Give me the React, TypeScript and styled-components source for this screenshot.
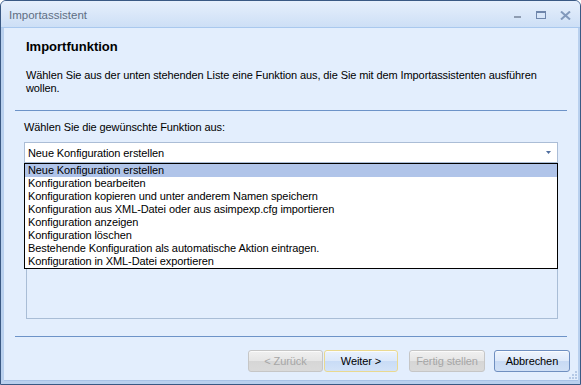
import React from 'react';
import styled, { createGlobalStyle } from 'styled-components';

const GlobalStyle = createGlobalStyle`
  html, body {
    margin: 0;
    padding: 0;
    width: 581px;
    height: 385px;
    overflow: hidden;
    background: #ffffff;
  }
  * {
    box-sizing: border-box;
  }
`;

const colours = {
  outer: '#3a5984',
  frame: '#b9d0ee',
  client: '#e3eefd',
  rule: '#6d93c8',
  text: '#000000',
  title: '#5f6e83',
};

const Window = styled.div`
  width: 581px;
  height: 385px;
  display: flex;
  flex-direction: column;
  border: 1px solid ${colours.outer};
  border-radius: 6px 6px 0 0;
  overflow: hidden;
  background: ${colours.frame};
  font-family: 'Liberation Sans', Arial, sans-serif;
  font-size: 11px;
  letter-spacing: -0.1px;
  color: ${colours.text};
`;

const TitleBar = styled.div`
  height: 27px;
  flex: none;
  display: flex;
  align-items: center;
  padding: 0 9px 0 8px;
  background: linear-gradient(#e6effc 0%, #dbe8f9 45%, #cddff6 100%);
  border-bottom: 1px solid #a9c8ee;
`;

const TitleText = styled.div`
  flex: 1;
  font-size: 11.5px;
  letter-spacing: 0;
  color: ${colours.title};
  padding-top: 2px;
`;

const Controls = styled.div`
  display: flex;
  align-items: center;
  gap: 14px;
  padding-top: 2px;
`;

const Frame = styled.div`
  flex: 1;
  display: flex;
  padding: 0 3px 3px 3px;
`;

const Client = styled.div`
  position: relative;
  flex: 1;
  display: flex;
  flex-direction: column;
  background: ${colours.client};
  border-bottom: 1px solid #a8c2e6;
`;

const Header = styled.div`
  padding: 11px 22px 15px 22px;
`;

const Heading = styled.div`
  font-size: 13px;
  font-weight: bold;
  letter-spacing: 0;
  line-height: 16px;
`;

const Description = styled.div`
  margin-top: 14px;
  line-height: 13px;
  width: 530px;
`;

const Rule = styled.div`
  height: 1px;
  margin: 0 11px;
  background: ${colours.rule};
  flex: none;
`;

const Main = styled.div`
  flex: 1;
  display: flex;
  flex-direction: column;
  padding: 10px 20px 17px 20px;
`;

const FieldLabel = styled.div`
  line-height: 13px;
`;

const ComboWrap = styled.div`
  position: relative;
  margin-top: 8px;
  z-index: 2;
`;

const Combo = styled.div`
  height: 21px;
  display: flex;
  align-items: center;
  padding: 0 6px 0 3px;
  background: #ffffff;
  border: 1px solid #abbdd6;
`;

const ComboValue = styled.div`
  flex: 1;
`;

const DropList = styled.div`
  position: absolute;
  top: 100%;
  left: 0;
  right: 0;
  background: #ffffff;
  border: 1px solid #000000;
`;

const Item = styled.div<{ $selected?: boolean }>`
  height: 13px;
  line-height: 13px;
  padding-left: 3px;
  white-space: nowrap;
  background: ${(p) => (p.$selected ? '#b0c4e9' : 'transparent')};
`;

const InfoPanel = styled.div`
  flex: 1;
  margin: 6px 0 0 2px;
  border: 1px solid #a9bdd6;
`;

const Footer = styled.div`
  display: flex;
  align-items: center;
  justify-content: flex-end;
  padding: 13px 8px 8px 0;
`;

const Button = styled.div<{ $variant: 'disabled' | 'focus' | 'normal'; $gap: number; $width: number }>`
  width: ${(p) => p.$width}px;
  height: 22px;
  margin-left: ${(p) => p.$gap}px;
  display: flex;
  align-items: center;
  justify-content: center;
  border-radius: 3px;
  font-size: 11px;
  color: ${(p) => (p.$variant === 'disabled' ? '#a6a6a6' : '#000000')};
  border: 1px solid
    ${(p) => (p.$variant === 'disabled' ? '#c6c6c6' : p.$variant === 'focus' ? '#ead98f' : '#6f8fc0')};
  background: ${(p) =>
    p.$variant === 'disabled'
      ? 'linear-gradient(#f0f0f0 0%, #e6e6e6 48%, #d6d6d6 52%, #dadada 100%)'
      : p.$variant === 'focus'
      ? 'linear-gradient(#eaf2fd 0%, #dde9fa 48%, #c9dcf6 52%, #d3e3f8 100%)'
      : 'linear-gradient(#eef4fd 0%, #dfeafa 48%, #c8daf4 52%, #d0e0f6 100%)'};
  box-shadow: inset 0 1px 0 rgba(255, 255, 255, 0.7);
`;

const Grip = styled.svg`
  position: absolute;
  right: 0;
  bottom: 0;
`;

const items = [
  'Neue Konfiguration erstellen',
  'Konfiguration bearbeiten',
  'Konfiguration kopieren und unter anderem Namen speichern',
  'Konfiguration aus XML-Datei oder aus asimpexp.cfg importieren',
  'Konfiguration anzeigen',
  'Konfiguration löschen',
  'Bestehende Konfiguration als automatische Aktion eintragen.',
  'Konfiguration in XML-Datei exportieren',
];

function App() {
  return (
    <>
      <GlobalStyle />
      <Window>
        <TitleBar>
          <TitleText>Importassistent</TitleText>
          <Controls>
            <svg width="8" height="10" viewBox="0 0 8 10">
              <rect x="0" y="6" width="7" height="2" fill="#8e9cb1" />
            </svg>
            <svg width="10" height="9" viewBox="0 0 10 9">
              <rect x="0.5" y="0.5" width="9" height="7" fill="none" stroke="#6f86ab" />
              <rect x="0" y="0" width="10" height="2" fill="#6f86ab" />
            </svg>
            <svg width="11" height="9" viewBox="0 0 11 9">
              <path d="M1 0.5 L10 8.5 M10 0.5 L1 8.5" stroke="#8299bb" strokeWidth="2" />
            </svg>
          </Controls>
        </TitleBar>
        <Frame>
          <Client>
            <Header>
              <Heading>Importfunktion</Heading>
              <Description>
                Wählen Sie aus der unten stehenden Liste eine Funktion aus, die Sie mit dem Importassistenten
                ausführen wollen.
              </Description>
            </Header>
            <Rule />
            <Main>
              <FieldLabel>Wählen Sie die gewünschte Funktion aus:</FieldLabel>
              <ComboWrap>
                <Combo>
                  <ComboValue>Neue Konfiguration erstellen</ComboValue>
                  <svg width="5" height="3" viewBox="0 0 5 3">
                    <path d="M0 0 H5 L2.5 3 Z" fill="#4f6e9f" />
                  </svg>
                </Combo>
                <DropList>
                  {items.map((it, i) => (
                    <Item key={it} $selected={i === 0}>
                      {it}
                    </Item>
                  ))}
                </DropList>
              </ComboWrap>
              <InfoPanel />
            </Main>
            <Rule />
            <Footer>
              <Button $variant="disabled" $gap={0} $width={75}>
                &lt; Zurück
              </Button>
              <Button $variant="focus" $gap={1} $width={74}>
                Weiter &gt;
              </Button>
              <Button $variant="disabled" $gap={11} $width={76}>
                Fertig stellen
              </Button>
              <Button $variant="normal" $gap={9} $width={76}>
                Abbrechen
              </Button>
            </Footer>
            <Grip width="10" height="10" viewBox="0 0 10 10">
              {[
                [7, 1],
                [7, 4],
                [4, 4],
                [7, 7],
                [4, 7],
                [1, 7],
              ].map(([x, y]) => (
                <rect key={`${x}-${y}`} x={x} y={y} width="2" height="2" fill="#b5c9e6" />
              ))}
            </Grip>
          </Client>
        </Frame>
      </Window>
    </>
  );
}

export default App;
